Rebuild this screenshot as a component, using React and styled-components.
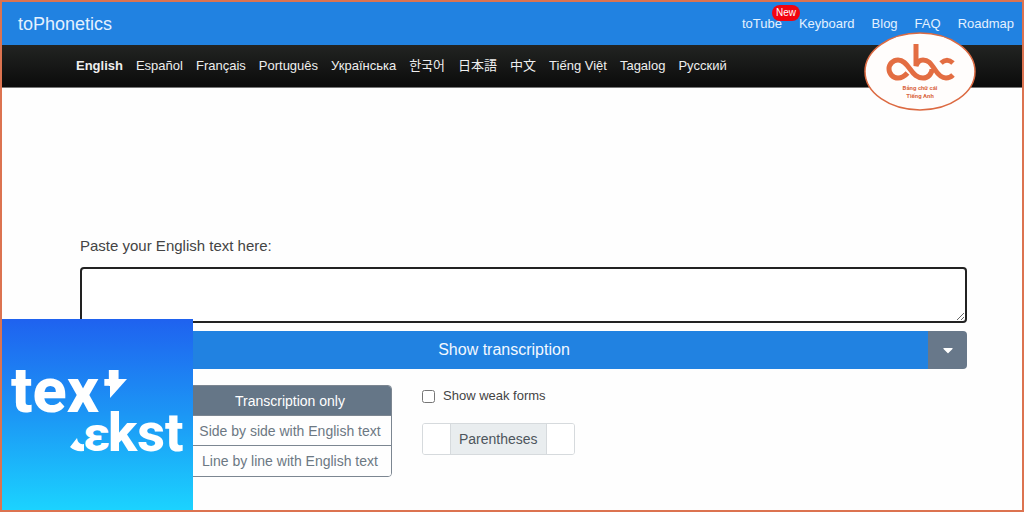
import React, { useState } from 'react';
import styled, { createGlobalStyle } from 'styled-components';
import { FaCaretDown } from 'react-icons/fa';

const GlobalStyle = createGlobalStyle`
    * {
        box-sizing: border-box;
    }
    body {
        margin: 0;
        background: #fefefe;
        color: #444;
        font-family: 'Liberation Sans', 'Noto Sans CJK KR', 'Noto Sans CJK JP', sans-serif;
    }
    button, textarea, input {
        font-family: inherit;
    }
`;

const Page = styled.div`
    position: relative;
    min-height: 100vh;
    border: 2px solid #dc7350;
`;

const Header = styled.header`
    display: flex;
    align-items: center;
    justify-content: space-between;
    height: 43px;
    padding: 0 8px 0 16px;
    background: #2182e1;
`;

const Brand = styled.a`
    color: #e3f1ff;
    font-size: 18px;
    line-height: 24px;
    text-decoration: none;
`;

const TopNav = styled.nav`
    display: flex;
    gap: 17px;
`;

const TopLink = styled.a`
    position: relative;
    color: #e3f1ff;
    font-size: 13px;
    line-height: 20px;
    text-decoration: none;
`;

const Badge = styled.span`
    position: absolute;
    top: -9px;
    right: -18px;
    padding: 0 4px;
    border-radius: 8px;
    background: #f20510;
    color: #fff;
    font-size: 10px;
    line-height: 16px;
`;

const LangBar = styled.nav`
    display: flex;
    align-items: center;
    gap: 13px;
    height: 43px;
    padding: 0 74px;
    background: linear-gradient(#222422, #0b0b0b);
    border-bottom: 1px solid #777;
`;

const LangLink = styled.a`
    color: #eee;
    font-size: 13px;
    line-height: 20px;
    font-weight: ${props => props.$active ? 700 : 400};
    text-decoration: none;
    white-space: nowrap;
`;

const Main = styled.main`
    padding: 148px 55px 32px 78px;
`;

const FieldLabel = styled.label`
    display: block;
    margin-bottom: 11px;
    font-size: 15px;
    line-height: 20px;
`;

const TextBox = styled.textarea`
    display: block;
    width: 100%;
    height: 56px;
    padding: 8px;
    border: 2px solid #222;
    border-radius: 4px;
    background: #fff;
    font-size: 15px;
    outline: none;
    resize: vertical;
`;

const ActionRow = styled.div`
    display: flex;
    height: 38px;
    margin-top: 8px;
    border-radius: 4px;
    overflow: hidden;
`;

const ShowButton = styled.button`
    flex: 1;
    border: 0;
    background: #2182e1;
    color: #f2f8ff;
    font-size: 16px;
`;

const MoreButton = styled.button`
    display: flex;
    align-items: center;
    justify-content: center;
    width: 39px;
    border: 0;
    background: #68788a;
    color: #fff;
    font-size: 16px;
`;

const Options = styled.div`
    display: flex;
    align-items: flex-start;
    gap: 30px;
    margin-top: 16px;
    padding-left: 108px;
`;

const ModeList = styled.div`
    display: flex;
    flex-direction: column;
    width: 204px;
    border: 1px solid #7c8691;
    border-radius: 4px;
    overflow: hidden;
`;

const ModeButton = styled.button`
    height: 30px;
    padding: 0;
    border: 0;
    border-bottom: 1px solid #7c8691;
    background: ${props => props.$active ? '#657687' : '#fefefe'};
    color: ${props => props.$active ? '#fff' : '#6c7883'};
    font-size: 14px;
    white-space: nowrap;
    &:last-child {
        border-bottom: 0;
    }
`;

const Extras = styled.div`
    display: flex;
    flex-direction: column;
    align-items: flex-start;
    gap: 16px;
`;

const CheckLabel = styled.label`
    display: flex;
    align-items: center;
    gap: 8px;
    font-size: 13px;
    line-height: 22px;
`;

const Check = styled.input`
    width: 13px;
    height: 13px;
    margin: 0;
`;

const Brackets = styled.div`
    display: flex;
    height: 32px;
    border: 1px solid #d6dadd;
    border-radius: 3px;
    background: #fff;
    overflow: hidden;
`;

const BracketInput = styled.input`
    width: 27px;
    padding: 0;
    border: 0;
    background: #fff;
    text-align: center;
`;

const BracketLabel = styled.span`
    display: flex;
    align-items: center;
    padding: 0 8px;
    border: solid #d6dadd;
    border-width: 0 1px;
    background: #e9edef;
    color: #4d555c;
    font-size: 14px;
`;

const AbcBadge = styled.svg`
    position: absolute;
    top: 30px;
    right: 46px;
    width: 112px;
    height: 80px;
`;

const TextLogo = styled.svg`
    position: absolute;
    left: 0;
    bottom: 0;
    width: 191px;
    height: 191px;
`;

const languages = [
    'English', 'Español', 'Français', 'Português', 'Українська', '한국어',
    '日本語', '中文', 'Tiếng Việt', 'Tagalog', 'Русский',
];

const modes = ['Transcription only', 'Side by side with English text', 'Line by line with English text'];

const AbcLogo = () => (
    <AbcBadge viewBox="0 0 112 80" role="img" aria-label="Bảng chữ cái Tiếng Anh">
        <ellipse cx="56" cy="39.5" rx="55" ry="38.5" fill="#fffdfc" stroke="#dc6a42" strokeWidth="1.5" />
        <g fill="none" stroke="#e36d42" strokeWidth="5">
            <path d="M43.500 41 Q39 46 34 46 A9 9 0 0 1 34 28 C39 28 42 31.500 46 37 C50 42.500 53 46 59 46 A9 9 0 0 0 68 37" />
            <path d="M52 12 V34 Q54 28 59 28 C65 28 67 32 70.500 37 C74 42.500 77 46 82 46 Q86 46 89 43" />
            <path d="M89 31 Q83 25.500 77 31" />
        </g>
        <g fill="#d9663f" fontFamily="Roboto, sans-serif" fontWeight="700" fontSize="6" textAnchor="middle">
            <text x="56" y="58">Bảng chữ cái</text>
            <text x="56" y="66">Tiếng Anh</text>
        </g>
    </AbcBadge>
);

const TekstLogo = () => (
    <TextLogo viewBox="0 0 191 191" role="img" aria-label="text tekst">
        <defs>
            <linearGradient id="sky" x1="0" y1="0" x2="0" y2="1">
                <stop offset="0" stopColor="#1f62ef" />
                <stop offset="0.5" stopColor="#1c96f5" />
                <stop offset="1" stopColor="#1bd3ff" />
            </linearGradient>
            <clipPath id="cut">
                <path d="M100 45 H119 V66 L108 78 V67 H100 Z" />
            </clipPath>
        </defs>
        <rect width="191" height="191" fill="url(#sky)" />
        <g fill="#fff" fontFamily="Roboto, sans-serif" fontWeight="800">
            <text x="9" y="93" fontSize="63">tex</text>
            <text x="102" y="93" fontSize="63" clipPath="url(#cut)">t</text>
            <path d="M108 60 H125 L108 79 Z" />
            <text x="81" y="132" fontSize="48">ε</text>
            <path d="M68 128 L75 119 Q76 126 82 125 V132 Q73 133 68 128 Z" />
            <text x="106" y="132" fontSize="54">kst</text>
        </g>
    </TextLogo>
);

const App = () => {
    const [mode, setMode] = useState(0);

    return (
        <>
            <GlobalStyle />
            <Page>
                <Header>
                    <Brand href="#home">toPhonetics</Brand>
                    <TopNav>
                        <TopLink href="#totube">toTube<Badge>New</Badge></TopLink>
                        <TopLink href="#keyboard">Keyboard</TopLink>
                        <TopLink href="#blog">Blog</TopLink>
                        <TopLink href="#faq">FAQ</TopLink>
                        <TopLink href="#roadmap">Roadmap</TopLink>
                    </TopNav>
                </Header>
                <LangBar>
                    {languages.map((name, i) => (
                        <LangLink key={name} href={`#lang-${i}`} $active={i === 0}>{name}</LangLink>
                    ))}
                </LangBar>
                <Main>
                    <FieldLabel htmlFor="source">Paste your English text here:</FieldLabel>
                    <TextBox id="source" />
                    <ActionRow>
                        <ShowButton type="button">Show transcription</ShowButton>
                        <MoreButton type="button" aria-label="More options"><FaCaretDown /></MoreButton>
                    </ActionRow>
                    <Options>
                        <ModeList>
                            {modes.map((text, i) => (
                                <ModeButton key={text} type="button" $active={mode === i} onClick={() => setMode(i)}>
                                    {text}
                                </ModeButton>
                            ))}
                        </ModeList>
                        <Extras>
                            <CheckLabel htmlFor="weak">
                                <Check id="weak" type="checkbox" />
                                Show weak forms
                            </CheckLabel>
                            <Brackets>
                                <BracketInput aria-label="Opening parenthesis" />
                                <BracketLabel>Parentheses</BracketLabel>
                                <BracketInput aria-label="Closing parenthesis" />
                            </Brackets>
                        </Extras>
                    </Options>
                </Main>
                <AbcLogo />
                <TekstLogo />
            </Page>
        </>
    );
};

export default App;
